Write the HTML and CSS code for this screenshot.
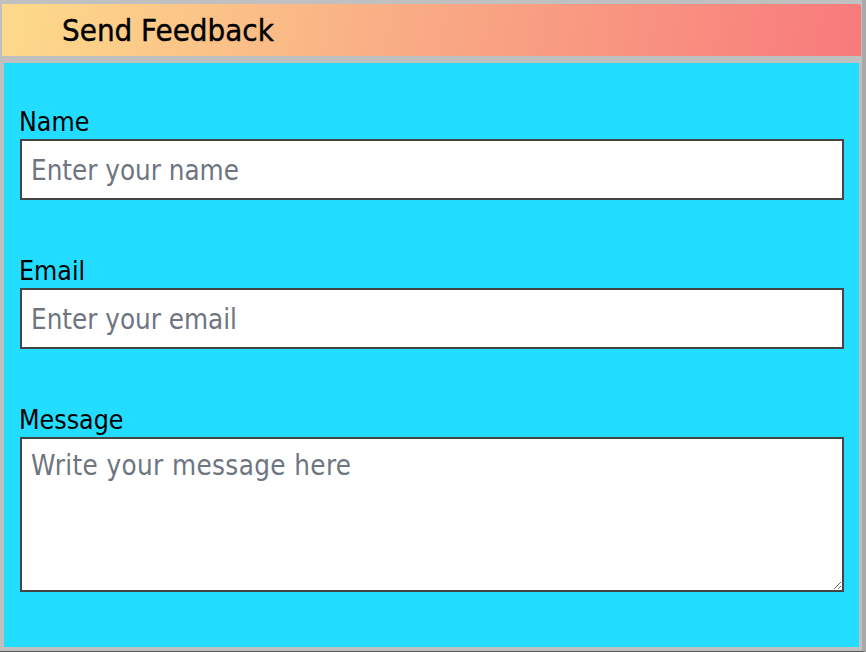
FILE: index.html
```html
<!DOCTYPE html>
<html lang="en">
<head>
<meta charset="utf-8">
<title>Send Feedback</title>
<link rel="stylesheet" href="styles.css">
</head>
<body>
<div class="window">
  <header class="titlebar"><h1 class="title">Send Feedback</h1></header>
  <form class="panel">
    <div class="field">
      <label class="label" for="name">Name</label>
      <input class="input" id="name" type="text" placeholder="Enter your name">
    </div>
    <div class="field">
      <label class="label" for="email">Email</label>
      <input class="input" id="email" type="email" placeholder="Enter your email">
    </div>
    <div class="field">
      <label class="label" for="msg">Message</label>
      <textarea class="input textarea" id="msg" placeholder="Write your message here"></textarea>
    </div>
  </form>
</div>
</body>
</html>
```
FILE: styles.css
```css
html, body {
  margin: 0;
  padding: 0;
  background: #c0c0c0;
}
body {
  width: 866px;
  height: 652px;
  overflow: hidden;
  font-family: "DejaVu Sans Condensed", "DejaVu Sans", sans-serif;
}
.window {
  width: 866px;
  height: 652px;
  border-bottom: 1px solid #555;
  border-right: 4px solid #a9a9a9;
  padding-top: 4px;
  box-sizing: border-box;
  display: flex;
  flex-direction: column;
}
.titlebar {
  margin: 0 1px 0 2px;
  height: 52px;
  background: linear-gradient(100deg, #fddb8b 0%, #f9a984 50%, #f87a7c 100%);
  border-top-right-radius: 3px;
  display: flex;
  align-items: center;
  padding-left: 60px;
}
.title {
  margin: 0;
  font-size: 31px;
  font-weight: normal;
  color: #000;
  -webkit-text-stroke: 0.4px #000;
}
.panel {
  margin: 7px 3px 0 4px;
  height: 584px;
  background: #22ddff;
  padding: 46px 15px 0 16px;
  box-sizing: border-box;
  display: flex;
  flex-direction: column;
  gap: 58px;
}
.field {
  display: flex;
  flex-direction: column;
}
.label {
  font-size: 26.5px;
  line-height: 26px;
  height: 30px;
  color: #000;
  margin-left: -1px;
}
.input {
  width: 824px;
  height: 61px;
  box-sizing: border-box;
  border: 2px solid #444;
  background: #fff;
  font-family: inherit;
  font-size: 27.5px;
  padding: 0 0 0 9px;
  margin: 0;
  outline: none;
  color: #000;
}
.input::placeholder {
  color: #6e7580;
}
.textarea {
  height: 155px;
  padding-top: 10px;
  resize: vertical;
  line-height: 1.2;
  letter-spacing: 0.4px;
}
```
